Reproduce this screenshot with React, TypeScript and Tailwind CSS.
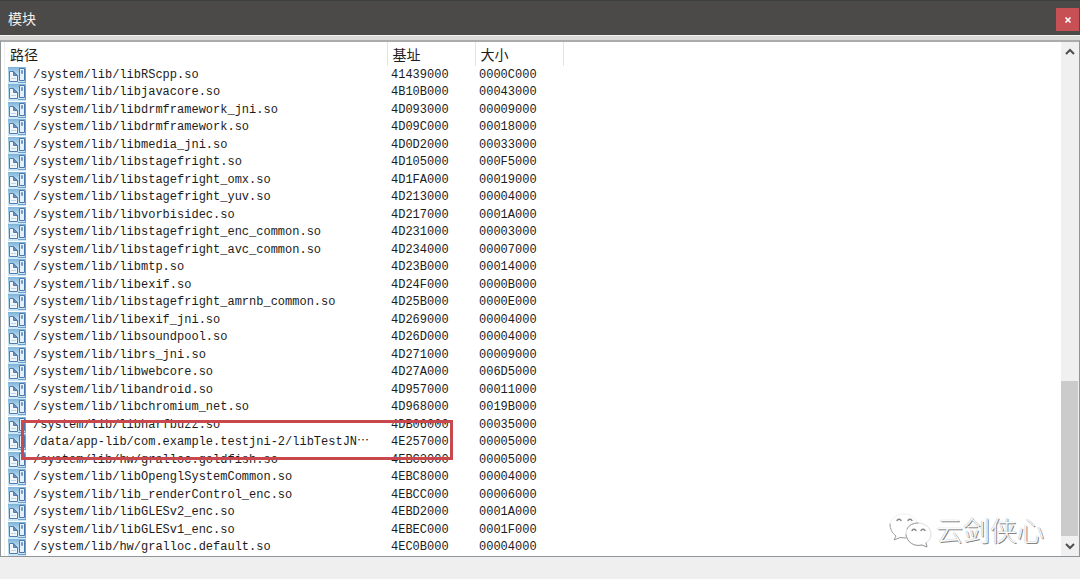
import React from "react";

type Module = { path: string; base: string; size: string; clipped?: boolean };

const modules: Module[] = [
  { path: "/system/lib/libRScpp.so", base: "41439000", size: "0000C000" },
  { path: "/system/lib/libjavacore.so", base: "4B10B000", size: "00043000" },
  { path: "/system/lib/libdrmframework_jni.so", base: "4D093000", size: "00009000" },
  { path: "/system/lib/libdrmframework.so", base: "4D09C000", size: "00018000" },
  { path: "/system/lib/libmedia_jni.so", base: "4D0D2000", size: "00033000" },
  { path: "/system/lib/libstagefright.so", base: "4D105000", size: "000F5000" },
  { path: "/system/lib/libstagefright_omx.so", base: "4D1FA000", size: "00019000" },
  { path: "/system/lib/libstagefright_yuv.so", base: "4D213000", size: "00004000" },
  { path: "/system/lib/libvorbisidec.so", base: "4D217000", size: "0001A000" },
  { path: "/system/lib/libstagefright_enc_common.so", base: "4D231000", size: "00003000" },
  { path: "/system/lib/libstagefright_avc_common.so", base: "4D234000", size: "00007000" },
  { path: "/system/lib/libmtp.so", base: "4D23B000", size: "00014000" },
  { path: "/system/lib/libexif.so", base: "4D24F000", size: "0000B000" },
  { path: "/system/lib/libstagefright_amrnb_common.so", base: "4D25B000", size: "0000E000" },
  { path: "/system/lib/libexif_jni.so", base: "4D269000", size: "00004000" },
  { path: "/system/lib/libsoundpool.so", base: "4D26D000", size: "00004000" },
  { path: "/system/lib/librs_jni.so", base: "4D271000", size: "00009000" },
  { path: "/system/lib/libwebcore.so", base: "4D27A000", size: "006D5000" },
  { path: "/system/lib/libandroid.so", base: "4D957000", size: "00011000" },
  { path: "/system/lib/libchromium_net.so", base: "4D968000", size: "0019B000" },
  { path: "/system/lib/libharfbuzz.so", base: "4DB06000", size: "00035000" },
  { path: "/data/app-lib/com.example.testjni-2/libTestJN", base: "4E257000", size: "00005000", clipped: true },
  { path: "/system/lib/hw/gralloc.goldfish.so", base: "4EBC3000", size: "00005000" },
  { path: "/system/lib/libOpenglSystemCommon.so", base: "4EBC8000", size: "00004000" },
  { path: "/system/lib/lib_renderControl_enc.so", base: "4EBCC000", size: "00006000" },
  { path: "/system/lib/libGLESv2_enc.so", base: "4EBD2000", size: "0001A000" },
  { path: "/system/lib/libGLESv1_enc.so", base: "4EBEC000", size: "0001F000" },
  { path: "/system/lib/hw/gralloc.default.so", base: "4EC0B000", size: "00004000" },
];

function ModuleIcon() {
  return (
    <svg viewBox="0 0 18 17" className="h-[17px] w-[18px] shrink-0" aria-hidden="true">
      <defs>
        <linearGradient id="module-sky" x1="0" y1="0" x2="0" y2="1">
          <stop offset="0" stopColor="#7db2d8" />
          <stop offset="0.4" stopColor="#b4d8ee" />
          <stop offset="1" stopColor="#cfe8f5" />
        </linearGradient>
      </defs>
      <rect width="18" height="17" fill="url(#module-sky)" />
      <path d="M1.500 4.500H5.500L9.500 8.500V14.500H1.500Z" fill="#eff6fb" stroke="#527cb0" />
      <path d="M5.500 4.500V8.500H9.500Z" fill="#6f93bd" stroke="#527cb0" />
      <path d="M3 11.500H8" stroke="#bdd4e8" />
      <path d="M11.500 1.500H16.500V13.500H11.500Z" fill="#e4f0fa" stroke="#4a76ae" />
      <path d="M13.500 3.500H14.500V6.500H13.500Z" fill="#b5d2ec" stroke="#7198c8" />
      <path d="M10 15.500H18M17.500 2V16" stroke="#6f9fca" />
    </svg>
  );
}

function ModuleRow({ module }: { module: Module }) {
  return (
    <tr className="odd:h-[18px] even:h-[17px]">
      <td className="p-0">
        <div className="relative flex h-[17px] items-center gap-[7px] pl-[3px]">
          <ModuleIcon />
          <span className="whitespace-pre">
            {module.path}
            {module.clipped && <span className="font-['Noto_Sans_CJK_SC',sans-serif] leading-none">…</span>}
          </span>
          {module.clipped && (
            <span className="pointer-events-none absolute -top-[14px] left-4 z-10 h-10 w-[432px] border-[3px] border-[#c9484e]" />
          )}
        </div>
      </td>
      <td className="p-0 pl-1">{module.base}</td>
      <td className="p-0 pl-1">{module.size}</td>
      <td className="p-0" />
    </tr>
  );
}

function ScrollBar() {
  return (
    <div className="flex w-[18px] shrink-0 flex-col bg-[#f0f0f1]">
      <button aria-label="向上滚动" className="flex h-[18px] items-center justify-center">
        <svg viewBox="0 0 10 7" className="h-[7px] w-[10px]">
          <path d="M1 6L5 2L9 6" fill="none" stroke="#505050" strokeWidth="2" />
        </svg>
      </button>
      <div className="flex-[320]" />
      <div className="mr-px flex-[155] bg-[#cbcbcc]" />
      <button aria-label="向下滚动" className="flex h-5 items-center justify-center">
        <svg viewBox="0 0 10 7" className="h-[7px] w-[10px]">
          <path d="M1 1L5 5L9 1" fill="none" stroke="#505050" strokeWidth="2" />
        </svg>
      </button>
    </div>
  );
}

function Watermark() {
  return (
    <div className="pointer-events-none absolute right-[35px] bottom-2 flex items-center gap-1">
      <svg viewBox="0 0 44 36" className="h-9 w-11" fill="none" stroke="#9b9b9b" strokeLinecap="round">
        <path d="M29 10C27 5 22 2 16 2C8 2 2 7 2 14" stroke="#f0f0f0" />
        <path d="M2 12C2 17 4 21 8 24L6 28L12 25.500L18 26" />
        <path d="M18 22C18 15 23 11 30 11C37 11 43 16 43 22C43 26 41 29 38 31L39 35L34 33C26 35 18 30 18 22Z" fill="#ffffff" stroke="#dddddd" />
        <path d="M18 23C19 30 26 35 34 33L39 35L38 31M19 17C21 13 25 11 30 11" />
        <path d="M9 8.500Q11 6 13 8.500M20 8.500Q22 6 24 8.500M24 18.500Q26 16 28 18.500M33 18.500Q35 16 37 18.500" stroke="#858585" strokeWidth="1.300" />
      </svg>
      <span className="font-['Noto_Sans_CJK_SC',sans-serif] text-[27px] leading-9 font-light text-[#fafafa] [text-shadow:1px_1px_0_#858585,0_0_1px_#999999]">
        云剑侠心
      </span>
    </div>
  );
}

export default function App() {
  return (
    <main lang="zh-CN" className="flex min-h-screen flex-col bg-[#efefef] font-['Noto_Sans_CJK_SC',sans-serif] text-[#1c1c1c]">
      <header className="flex h-[35px] items-center justify-between border-t border-[#3c403f] bg-[#4c4a48] pr-px pb-px pl-2">
        <h1 className="text-sm text-[#f2f2f2]">模块</h1>
        <button aria-label="关闭" className="mt-1 flex h-[23px] w-[23px] items-center justify-center bg-[#c75055]">
          <svg viewBox="0 0 8 8" className="h-2 w-2">
            <path d="M1.500 1.500L6.500 6.500M6.500 1.500L1.500 6.500" stroke="#ffffff" strokeWidth="1.600" />
          </svg>
        </button>
      </header>
      <div className="h-[5px] border-t border-[#f4f4f4] bg-[#dadada]" />
      <section className="relative flex border border-t-2 border-[#8f9598] border-t-[#a9abad] bg-white">
        <div className="w-1 shrink-0 border-r border-[#eeeeee]" />
        <div className="min-w-0 flex-1">
          <table className="w-full table-fixed border-collapse font-['Liberation_Mono','Noto_Sans_CJK_SC',monospace] text-xs leading-[17px]">
            <colgroup>
              <col className="w-[382px]" />
              <col className="w-[88px]" />
              <col className="w-[88px]" />
              <col />
            </colgroup>
            <thead>
              <tr className="text-left font-['Noto_Sans_CJK_SC',sans-serif] text-sm leading-6">
                <th className="border-r border-[#e4e4e4] p-0 pl-[5px] font-normal leading-6">路径</th>
                <th className="border-r border-[#e4e4e4] p-0 pl-[5px] font-normal leading-6">基址</th>
                <th className="border-r border-[#e4e4e4] p-0 pl-[5px] font-normal leading-6">大小</th>
                <td />
              </tr>
            </thead>
            <tbody>
              {modules.map((module) => (
                <ModuleRow key={module.path} module={module} />
              ))}
            </tbody>
          </table>
        </div>
        <ScrollBar />
        <Watermark />
      </section>
    </main>
  );
}
